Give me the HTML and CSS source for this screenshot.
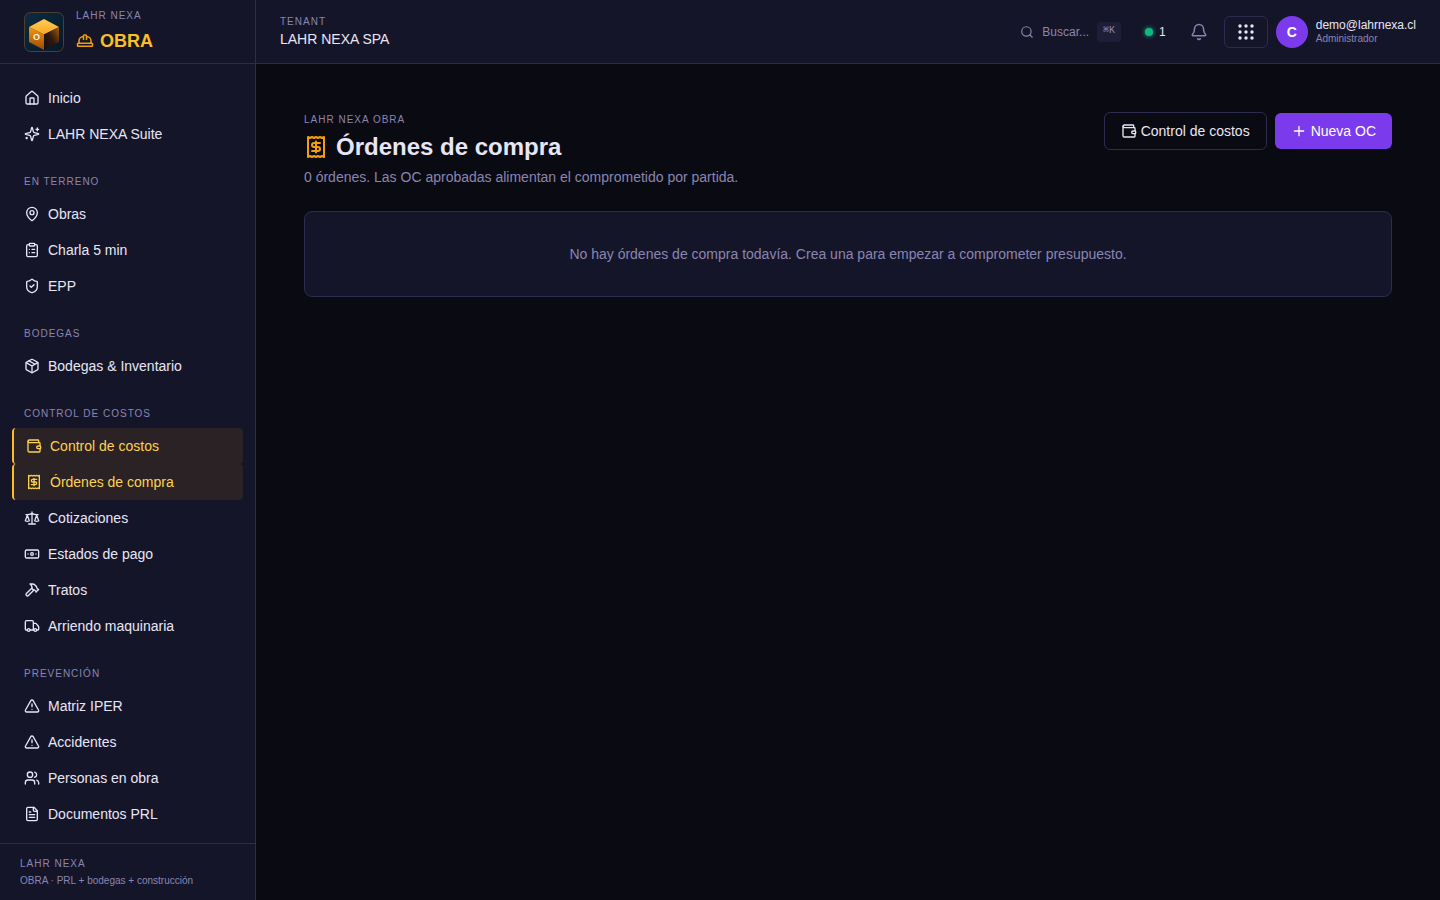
FILE: index.html
```html
<!DOCTYPE html>
<html lang="es">
<head>
<meta charset="utf-8">
<meta name="viewport" content="width=device-width, initial-scale=1">
<title>Órdenes de compra · LAHR NEXA OBRA</title>
<link rel="stylesheet" href="styles.css">
</head>
<body>
<svg class="sprite" aria-hidden="true">
  <symbol id="i-house" viewBox="0 0 24 24"><path d="M15 21v-8a1 1 0 0 0-1-1h-4a1 1 0 0 0-1 1v8"/><path d="M3 10a2 2 0 0 1 .709-1.528l7-5.999a2 2 0 0 1 2.582 0l7 5.999A2 2 0 0 1 21 10v9a2 2 0 0 1-2 2H5a2 2 0 0 1-2-2z"/></symbol>
  <symbol id="i-sparkles" viewBox="0 0 24 24"><path d="M9.937 15.5A2 2 0 0 0 8.5 14.063l-6.135-1.582a.5.5 0 0 1 0-.962L8.5 9.936A2 2 0 0 0 9.937 8.5l1.582-6.135a.5.5 0 0 1 .963 0L14.063 8.5A2 2 0 0 0 15.5 9.937l6.135 1.581a.5.5 0 0 1 0 .964L15.5 14.063a2 2 0 0 0-1.437 1.437l-1.582 6.135a.5.5 0 0 1-.963 0z"/><path d="M20 3v4M22 5h-4M4 17v2M5 18H3"/></symbol>
  <symbol id="i-pin" viewBox="0 0 24 24"><path d="M20 10c0 4.993-5.539 10.193-7.399 11.799a1 1 0 0 1-1.202 0C9.539 20.193 4 14.993 4 10a8 8 0 0 1 16 0"/><circle cx="12" cy="10" r="3"/></symbol>
  <symbol id="i-clipboard" viewBox="0 0 24 24"><rect width="8" height="4" x="8" y="2" rx="1"/><path d="M16 4h2a2 2 0 0 1 2 2v14a2 2 0 0 1-2 2H6a2 2 0 0 1-2-2V6a2 2 0 0 1 2-2h2M12 11h4M12 16h4M8 11h.01M8 16h.01"/></symbol>
  <symbol id="i-shield" viewBox="0 0 24 24"><path d="M20 13c0 5-3.5 7.5-7.66 8.95a1 1 0 0 1-.67-.01C7.5 20.5 4 18 4 13V6a1 1 0 0 1 1-1c2 0 4.5-1.2 6.24-2.72a1.17 1.17 0 0 1 1.52 0C14.51 3.81 17 5 19 5a1 1 0 0 1 1 1z"/><path d="m9 12 2 2 4-4"/></symbol>
  <symbol id="i-package" viewBox="0 0 24 24"><path d="M11 21.73a2 2 0 0 0 2 0l7-4A2 2 0 0 0 21 16V8a2 2 0 0 0-1-1.73l-7-4a2 2 0 0 0-2 0l-7 4A2 2 0 0 0 3 8v8a2 2 0 0 0 1 1.73z"/><path d="M12 22V12M3.29 7 12 12l8.71-5M7.5 4.27l9 5.15"/></symbol>
  <symbol id="i-wallet" viewBox="0 0 24 24"><path d="M19 7V4a1 1 0 0 0-1-1H5a2 2 0 0 0 0 4h15a1 1 0 0 1 1 1v4h-3a2 2 0 0 0 0 4h3a1 1 0 0 0 1-1v-2a1 1 0 0 0-1-1"/><path d="M3 5v14a2 2 0 0 0 2 2h15a1 1 0 0 0 1-1v-4"/></symbol>
  <symbol id="i-receipt" viewBox="0 0 24 24"><path d="M4 2v20l2-1 2 1 2-1 2 1 2-1 2 1 2-1 2 1V2l-2 1-2-1-2 1-2-1-2 1-2-1-2 1Z"/><path d="M16 8h-6a2 2 0 1 0 0 4h4a2 2 0 1 1 0 4H8M12 17.5v-11"/></symbol>
  <symbol id="i-scale" viewBox="0 0 24 24"><path d="m16 16 3-8 3 8c-.87.65-1.92 1-3 1s-2.130-.35-3-1ZM2 16l3-8 3 8c-.87.65-1.920 1-3 1s-2.130-.35-3-1ZM7 21h10M12 3v18M3 7h2c2 0 5-1 7-2 2 1 5 2 7 2h2"/></symbol>
  <symbol id="i-banknote" viewBox="0 0 24 24"><rect width="20" height="12" x="2" y="6" rx="2"/><circle cx="12" cy="12" r="2"/><path d="M6 12h.01M18 12h.01"/></symbol>
  <symbol id="i-hammer" viewBox="0 0 24 24"><path d="m15 12-8.373 8.373a1 1 0 1 1-3-3L12 9M18 15l4-4"/><path d="m21.5 11.5-1.914-1.914A2 2 0 0 1 19 8.172V7l-2.260-2.260a6 6 0 0 0-4.202-1.756L9 2.960l.92.820A6.180 6.180 0 0 1 12 8.400V10l2 2h1.172a2 2 0 0 1 1.414.586L18.500 14.500"/></symbol>
  <symbol id="i-truck" viewBox="0 0 24 24"><path d="M14 18V6a2 2 0 0 0-2-2H4a2 2 0 0 0-2 2v11a1 1 0 0 0 1 1h2M15 18H9M19 18h2a1 1 0 0 0 1-1v-3.650a1 1 0 0 0-.22-.624l-3.480-4.350A1 1 0 0 0 17.520 8H14"/><circle cx="17" cy="18" r="2"/><circle cx="7" cy="18" r="2"/></symbol>
  <symbol id="i-alert" viewBox="0 0 24 24"><path d="m21.730 18-8-14a2 2 0 0 0-3.480 0l-8 14A2 2 0 0 0 4 21h16a2 2 0 0 0 1.730-3M12 9v4M12 17h.01"/></symbol>
  <symbol id="i-users" viewBox="0 0 24 24"><path d="M16 21v-2a4 4 0 0 0-4-4H6a4 4 0 0 0-4 4v2"/><circle cx="9" cy="7" r="4"/><path d="M22 21v-2a4 4 0 0 0-3-3.870M16 3.130a4 4 0 0 1 0 7.750"/></symbol>
  <symbol id="i-file" viewBox="0 0 24 24"><path d="M15 2H6a2 2 0 0 0-2 2v16a2 2 0 0 0 2 2h12a2 2 0 0 0 2-2V7Z"/><path d="M14 2v4a2 2 0 0 0 2 2h4M10 9H8M16 13H8M16 17H8"/></symbol>
  <symbol id="i-hat" viewBox="0 0 24 24"><path d="M10 10V5a1 1 0 0 1 1-1h2a1 1 0 0 1 1 1v5M14 6a6 6 0 0 1 6 6v3M4 15v-3a6 6 0 0 1 6-6"/><rect x="2" y="15" width="20" height="4" rx="1"/></symbol>
  <symbol id="i-search" viewBox="0 0 24 24"><circle cx="11" cy="11" r="8"/><path d="m21 21-4.300-4.300"/></symbol>
  <symbol id="i-bell" viewBox="0 0 24 24"><path d="M10.268 21a2 2 0 0 0 3.464 0M3.262 15.326A1 1 0 0 0 4 17h16a1 1 0 0 0 .740-1.673C19.410 13.956 18 12.499 18 8A6 6 0 0 0 6 8c0 4.499-1.411 5.956-2.738 7.326"/></symbol>
  <symbol id="i-plus" viewBox="0 0 24 24"><path d="M5 12h14M12 5v14"/></symbol>
</svg>
<div class="app">
  <aside class="sidebar">
    <div class="brand">
      <svg class="logo" viewBox="0 0 40 40" role="img" aria-label="Logo OBRA">
        <defs>
          <linearGradient id="bg" x1="0" y1="0" x2="1" y2="1"><stop offset="0" stop-color="#0d2b40"/><stop offset="1" stop-color="#061826"/></linearGradient>
          <linearGradient id="top" x1="0" y1="0" x2="0" y2="1"><stop offset="0" stop-color="#ffcd55"/><stop offset="1" stop-color="#f9a825"/></linearGradient>
          <linearGradient id="left" x1="0" y1="0" x2="0" y2="1"><stop offset="0" stop-color="#f39a13"/><stop offset="1" stop-color="#984608"/></linearGradient>
          <linearGradient id="right" x1="1" y1="0" x2="0" y2="1"><stop offset="0" stop-color="#a65a0c"/><stop offset=".5" stop-color="#2e180e"/><stop offset="1" stop-color="#120d12"/></linearGradient>
        </defs>
        <rect x=".5" y=".5" width="39" height="39" rx="6" fill="url(#bg)" stroke="#4b4130"/>
        <path d="M20 7 35 15 20 22.500 5 15Z" fill="url(#top)"/>
        <path d="M5 15 20 22.500V38L5 30Z" fill="url(#left)"/>
        <path d="M35 15 20 22.500V38L35 30Z" fill="url(#right)"/>
        <text class="logo-letter" x="12.500" y="28" text-anchor="middle">O</text>
      </svg>
      <div class="brand-text">
        <span class="eyebrow">LAHR NEXA</span>
        <span class="brand-name"><svg class="icon icon-hat"><use href="#i-hat"/></svg>OBRA</span>
      </div>
    </div>
    <nav class="nav" aria-label="Principal">
      <a class="nav-item" href="#"><svg class="icon"><use href="#i-house"/></svg>Inicio</a>
      <a class="nav-item" href="#"><svg class="icon"><use href="#i-sparkles"/></svg>LAHR NEXA Suite</a>
      <h2 class="nav-label eyebrow">EN TERRENO</h2>
      <a class="nav-item" href="#"><svg class="icon"><use href="#i-pin"/></svg>Obras</a>
      <a class="nav-item" href="#"><svg class="icon"><use href="#i-clipboard"/></svg>Charla 5 min</a>
      <a class="nav-item" href="#"><svg class="icon"><use href="#i-shield"/></svg>EPP</a>
      <h2 class="nav-label eyebrow">BODEGAS</h2>
      <a class="nav-item" href="#"><svg class="icon"><use href="#i-package"/></svg>Bodegas &amp; Inventario</a>
      <h2 class="nav-label eyebrow">CONTROL DE COSTOS</h2>
      <a class="nav-item active" href="#"><svg class="icon"><use href="#i-wallet"/></svg>Control de costos</a>
      <a class="nav-item active" href="#" aria-current="page"><svg class="icon"><use href="#i-receipt"/></svg>Órdenes de compra</a>
      <a class="nav-item" href="#"><svg class="icon"><use href="#i-scale"/></svg>Cotizaciones</a>
      <a class="nav-item" href="#"><svg class="icon"><use href="#i-banknote"/></svg>Estados de pago</a>
      <a class="nav-item" href="#"><svg class="icon"><use href="#i-hammer"/></svg>Tratos</a>
      <a class="nav-item" href="#"><svg class="icon"><use href="#i-truck"/></svg>Arriendo maquinaria</a>
      <h2 class="nav-label eyebrow">PREVENCIÓN</h2>
      <a class="nav-item" href="#"><svg class="icon"><use href="#i-alert"/></svg>Matriz IPER</a>
      <a class="nav-item" href="#"><svg class="icon"><use href="#i-alert"/></svg>Accidentes</a>
      <a class="nav-item" href="#"><svg class="icon"><use href="#i-users"/></svg>Personas en obra</a>
      <a class="nav-item" href="#"><svg class="icon"><use href="#i-file"/></svg>Documentos PRL</a>
    </nav>
    <footer class="side-footer">
      <span class="eyebrow">LAHR NEXA</span>
      <span class="tagline">OBRA · PRL + bodegas + construcción</span>
    </footer>
  </aside>
  <div class="content">
    <header class="topbar">
      <div class="tenant">
        <span class="eyebrow">TENANT</span>
        <span class="tenant-name">LAHR NEXA SPA</span>
      </div>
      <div class="tools">
        <button class="search" type="button"><svg class="icon icon-search"><use href="#i-search"/></svg>Buscar...<kbd class="kbd">⌘K</kbd></button>
        <span class="status"><span class="dot"></span>1</span>
        <button class="bell" type="button" aria-label="Notificaciones"><svg class="icon icon-bell"><use href="#i-bell"/></svg></button>
        <button class="apps" type="button" aria-label="Aplicaciones"><svg class="apps-icon" viewBox="0 0 18 18"><circle cx="3" cy="3" r="1.700"/><circle cx="9" cy="3" r="1.700"/><circle cx="15" cy="3" r="1.700"/><circle cx="3" cy="9" r="1.700"/><circle cx="9" cy="9" r="1.700"/><circle cx="15" cy="9" r="1.700"/><circle cx="3" cy="15" r="1.700"/><circle cx="9" cy="15" r="1.700"/><circle cx="15" cy="15" r="1.700"/></svg></button>
        <div class="user">
          <span class="avatar">C</span>
          <span class="user-text"><span class="user-mail">demo@lahrnexa.cl</span><span class="user-role">Administrador</span></span>
        </div>
      </div>
    </header>
    <main class="main">
      <div class="page-head">
        <div class="page-title">
          <span class="eyebrow">LAHR NEXA OBRA</span>
          <h1 class="title"><svg class="icon icon-title"><use href="#i-receipt"/></svg>Órdenes de compra</h1>
          <p class="subtitle">0 órdenes. Las OC aprobadas alimentan el comprometido por partida.</p>
        </div>
        <div class="actions">
          <a class="btn btn-outline" href="#"><svg class="icon"><use href="#i-wallet"/></svg>Control de costos</a>
          <a class="btn btn-primary" href="#"><svg class="icon"><use href="#i-plus"/></svg>Nueva OC</a>
        </div>
      </div>
      <section class="card">No hay órdenes de compra todavía. Crea una para empezar a comprometer presupuesto.</section>
    </main>
  </div>
</div>
</body>
</html>
```
FILE: styles.css
```css
:root {
  --bg: #0a0a12;
  --surface: #15152a;
  --border: #2d2b50;
  --text: #e8e6f5;
  --muted: #8a85b0;
  --amber: #fbbf24;
  --violet: #7c3aed;
}
* { box-sizing: border-box; }
body {
  margin: 0;
  background: var(--bg);
  color: var(--text);
  font: 14px/20px "Liberation Sans", Arial, sans-serif;
}
a { color: inherit; text-decoration: none; }
button { font: inherit; color: inherit; background: none; border: 0; padding: 0; cursor: pointer; }
.sprite { display: none; }
.icon {
  width: 16px;
  height: 16px;
  flex: none;
  fill: none;
  stroke: currentColor;
  stroke-width: 2;
  stroke-linecap: round;
  stroke-linejoin: round;
}
.eyebrow {
  font-size: 10px;
  line-height: 15px;
  font-weight: 400;
  letter-spacing: 1px;
  color: var(--muted);
}
.app { display: flex; height: 100vh; }

.sidebar {
  display: flex;
  flex-direction: column;
  flex: none;
  width: 256px;
  background: var(--surface);
  border-right: 1px solid var(--border);
}
.brand {
  display: flex;
  align-items: center;
  gap: 12px;
  height: 64px;
  flex: none;
  padding: 0 24px;
  border-bottom: 1px solid var(--border);
}
.logo { width: 40px; height: 40px; }
.logo-letter { fill: #fff3d6; font-size: 9px; font-weight: 700; }
.brand-text { display: flex; flex-direction: column; gap: 4px; }
.brand-name {
  display: flex;
  align-items: center;
  gap: 6px;
  font-size: 18px;
  line-height: 28px;
  font-weight: 700;
  color: var(--amber);
}
.icon-hat { width: 18px; height: 18px; color: #f59e0b; }
.nav { flex: 1; min-height: 0; overflow: hidden; padding: 16px 12px; }
.nav-item {
  display: flex;
  align-items: center;
  gap: 8px;
  padding: 8px 12px;
  border-radius: 4px;
}
.nav-item.active {
  border-left: 2px solid var(--amber);
  background: rgba(245, 158, 11, .1);
  color: #fcd34d;
}
.nav-label { margin: 0; padding: 22px 12px 7px; }
.side-footer {
  display: flex;
  flex-direction: column;
  gap: 2px;
  padding: 12px 20px;
  border-top: 1px solid var(--border);
}
.tagline { font-size: 10px; line-height: 15px; color: var(--muted); }

.content { flex: 1; min-width: 0; display: flex; flex-direction: column; }
.topbar {
  display: flex;
  align-items: center;
  justify-content: space-between;
  height: 64px;
  flex: none;
  padding: 0 24px;
  background: var(--surface);
  border-bottom: 1px solid var(--border);
}
.tenant { display: flex; flex-direction: column; }
.tools { display: flex; align-items: center; gap: 8px; }
.search {
  display: flex;
  align-items: center;
  gap: 8px;
  padding: 0 8px;
  font-size: 12px;
  color: var(--muted);
}
.icon-search { width: 14px; height: 14px; }
.kbd {
  height: 20px;
  padding: 0 6px;
  border-radius: 4px;
  background: #1f1e39;
  font: 10px/18px "Liberation Mono", monospace;
}
.status { display: flex; align-items: center; gap: 6px; padding: 0 8px; font-size: 12px; }
.dot {
  width: 8px;
  height: 8px;
  border-radius: 50%;
  background: #10b981;
  box-shadow: 0 0 4px #10b981;
}
.bell { display: flex; padding: 8px; color: var(--muted); }
.icon-bell { width: 18px; height: 18px; }
.apps {
  display: flex;
  align-items: center;
  justify-content: center;
  width: 44px;
  height: 32px;
  border: 1px solid var(--border);
  border-radius: 6px;
}
.apps-icon { width: 18px; height: 18px; fill: currentColor; }
.user { display: flex; align-items: center; gap: 8px; }
.avatar {
  display: grid;
  place-items: center;
  width: 32px;
  height: 32px;
  border-radius: 50%;
  background: var(--violet);
  color: #fff;
  font-weight: 700;
}
.user-text { display: flex; flex-direction: column; }
.user-mail { font-size: 12px; line-height: 14px; }
.user-role { font-size: 10px; line-height: 13px; color: var(--muted); }

.main { flex: 1; padding: 48px; }
.page-head { display: flex; align-items: flex-start; justify-content: space-between; gap: 16px; }
.page-title { display: flex; flex-direction: column; }
.title {
  display: flex;
  align-items: center;
  gap: 8px;
  margin: 4px 0;
  font-size: 24px;
  line-height: 32px;
  font-weight: 700;
}
.icon-title { width: 24px; height: 24px; color: #f59e0b; }
.subtitle { margin: 0; color: var(--muted); }
.actions { display: flex; align-items: center; gap: 8px; }
.btn {
  display: flex;
  align-items: center;
  gap: 4px;
  padding: 8px 16px;
  border-radius: 6px;
}
.btn-outline { border: 1px solid var(--border); }
.btn-primary { background: var(--violet); color: #fff; }
.card {
  margin-top: 24px;
  padding: 32px;
  border: 1px solid var(--border);
  border-radius: 8px;
  background: var(--surface);
  color: var(--muted);
  text-align: center;
}
```
